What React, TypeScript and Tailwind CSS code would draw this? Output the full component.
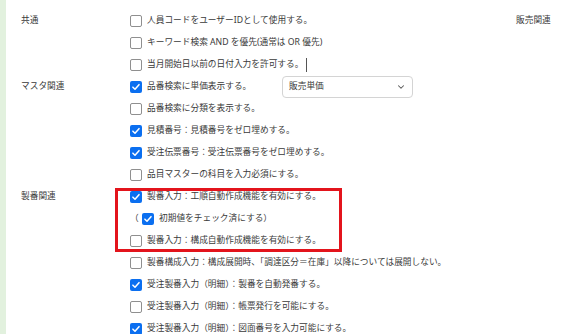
import { ChevronDown } from 'lucide-react'

type Fila = { texto: string; marcado: boolean; extra?: 'select' | 'cursor'; sangria?: boolean }

const GRUPOS: { etiqueta: string; filas: Fila[] }[] = [
  {
    etiqueta: '共通',
    filas: [
      { texto: '人員コードをユーザーIDとして使用する。', marcado: false },
      { texto: 'キーワード検索 AND を優先(通常は OR 優先)', marcado: false },
      { texto: '当月開始日以前の日付入力を許可する。', marcado: false, extra: 'cursor' },
    ],
  },
  {
    etiqueta: 'マスタ関連',
    filas: [
      { texto: '品番検索に単価表示する。', marcado: true, extra: 'select' },
      { texto: '品番検索に分類を表示する。', marcado: false },
      { texto: '見積番号：見積番号をゼロ埋めする。', marcado: true },
      { texto: '受注伝票番号：受注伝票番号をゼロ埋めする。', marcado: true },
      { texto: '品目マスターの科目を入力必須にする。', marcado: false },
    ],
  },
]

const SEIBAN_RESALTADO: Fila[] = [
  { texto: '製番入力：工順自動作成機能を有効にする。', marcado: true },
  { texto: '初期値をチェック済にする）', marcado: true, sangria: true },
  { texto: '製番入力：構成自動作成機能を有効にする。', marcado: false },
]

const SEIBAN_RESTO: Fila[] = [
  { texto: '製番構成入力：構成展開時、「調達区分＝在庫」以降については展開しない。', marcado: false },
  { texto: '受注製番入力（明細）：製番を自動発番する。', marcado: true },
  { texto: '受注製番入力（明細）：帳票発行を可能にする。', marcado: false },
  { texto: '受注製番入力（明細）：図面番号を入力可能にする。', marcado: true },
]

function Casilla({ marcado }: { marcado: boolean }) {
  if (marcado) {
    return (
      <span className="flex h-[12px] w-[12px] shrink-0 items-center justify-center rounded-[2px] bg-[#0b6ff0]">
        <svg viewBox="0 0 12 12" className="h-[10px] w-[10px]" aria-hidden="true">
          <path d="M2.3 6.2 L4.8 8.6 L9.6 3.2" fill="none" stroke="white" strokeWidth="1.8" strokeLinecap="round" strokeLinejoin="round" />
        </svg>
      </span>
    )
  }
  return <span className="h-[12px] w-[12px] shrink-0 rounded-[2px] border border-[#8f8f8f] bg-white" />
}

function FilaOpcion({ fila }: { fila: Fila }) {
  return (
    <div className="flex h-[22px] items-center">
      {fila.sangria && <span className="w-[12px] shrink-0">（</span>}
      <Casilla marcado={fila.marcado} />
      <span className={fila.extra === 'select' ? 'ml-[5px] w-[135px] whitespace-nowrap' : 'ml-[5px] whitespace-nowrap'}>{fila.texto}</span>
      {fila.extra === 'cursor' && <span className="ml-[3px] h-[14px] w-px bg-[#555]" />}
      {fila.extra === 'select' && (
        <div className="flex h-[22px] w-[131px] items-center justify-between rounded-[4px] border border-[#d4d4d4] bg-white pl-[6px] pr-[6px]">
          <span>販売単価</span>
          <ChevronDown className="h-[10px] w-[10px] text-[#555]" strokeWidth={2.5} aria-hidden="true" />
        </div>
      )}
    </div>
  )
}

export default function App() {
  return (
    <div
      className="flex h-[334px] w-[561px] overflow-hidden bg-white text-[8.7px] text-[#3a3a3a]"
      style={{ fontFamily: '"Noto Sans", "Noto Sans CJK JP", sans-serif' }}
    >
      <div className="w-[6px] shrink-0 bg-[#e2f1de]" />
      <div className="flex pl-[15px] pt-[10px]">
        <div className="flex w-[495px] flex-col">
          {GRUPOS.map((grupo) => (
            <div key={grupo.etiqueta} className="flex">
              <div className="flex h-[22px] w-[109px] shrink-0 items-center">{grupo.etiqueta}</div>
              <div className="flex flex-col">
                {grupo.filas.map((fila) => (
                  <FilaOpcion key={fila.texto} fila={fila} />
                ))}
              </div>
            </div>
          ))}
          <div className="flex">
            <div className="flex h-[22px] w-[109px] shrink-0 items-center">製番関連</div>
            <div className="flex flex-col">
              <div className="relative flex flex-col">
                {SEIBAN_RESALTADO.map((fila) => (
                  <FilaOpcion key={fila.texto} fila={fila} />
                ))}
                <div className="pointer-events-none absolute left-[-15px] top-[2px] h-[64px] w-[227px] border-[3px] border-[#e3141c]" />
              </div>
              {SEIBAN_RESTO.map((fila) => (
                <FilaOpcion key={fila.texto} fila={fila} />
              ))}
            </div>
          </div>
        </div>
        <div className="flex h-[22px] items-center whitespace-nowrap">販売関連</div>
      </div>
    </div>
  )
}
